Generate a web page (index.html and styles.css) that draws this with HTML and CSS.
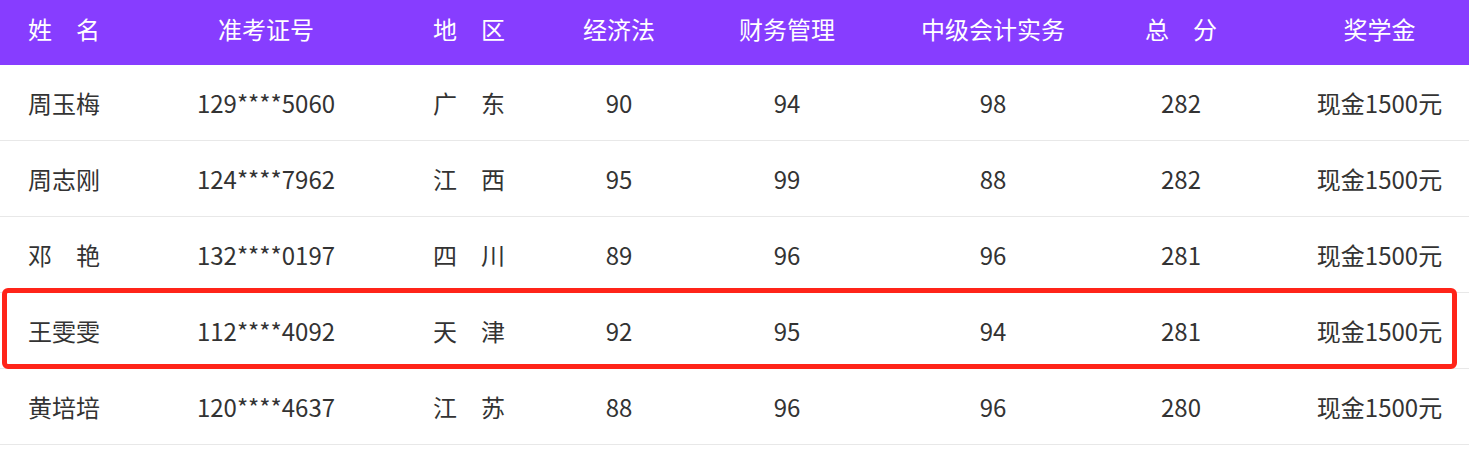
FILE: index.html
```html
<!DOCTYPE html>
<html lang="zh-CN">
<head>
<meta charset="utf-8">
<title>奖学金名单</title>
<link rel="stylesheet" href="styles.css">
</head>
<body>
<div class="table">
  <div class="row head">
    <div class="cell first">姓　名</div>
    <div class="cell">准考证号</div>
    <div class="cell">地　区</div>
    <div class="cell">经济法</div>
    <div class="cell">财务管理</div>
    <div class="cell">中级会计实务</div>
    <div class="cell">总　分</div>
    <div class="cell">奖学金</div>
  </div>
  <div class="row">
    <div class="cell first">周玉梅</div>
    <div class="cell">129****5060</div>
    <div class="cell">广　东</div>
    <div class="cell">90</div>
    <div class="cell">94</div>
    <div class="cell">98</div>
    <div class="cell">282</div>
    <div class="cell">现金1500元</div>
  </div>
  <div class="row">
    <div class="cell first">周志刚</div>
    <div class="cell">124****7962</div>
    <div class="cell">江　西</div>
    <div class="cell">95</div>
    <div class="cell">99</div>
    <div class="cell">88</div>
    <div class="cell">282</div>
    <div class="cell">现金1500元</div>
  </div>
  <div class="row">
    <div class="cell first">邓　艳</div>
    <div class="cell">132****0197</div>
    <div class="cell">四　川</div>
    <div class="cell">89</div>
    <div class="cell">96</div>
    <div class="cell">96</div>
    <div class="cell">281</div>
    <div class="cell">现金1500元</div>
  </div>
  <div class="row highlight">
    <div class="cell first">王雯雯</div>
    <div class="cell">112****4092</div>
    <div class="cell">天　津</div>
    <div class="cell">92</div>
    <div class="cell">95</div>
    <div class="cell">94</div>
    <div class="cell">281</div>
    <div class="cell">现金1500元</div>
  </div>
  <div class="row">
    <div class="cell first">黄培培</div>
    <div class="cell">120****4637</div>
    <div class="cell">江　苏</div>
    <div class="cell">88</div>
    <div class="cell">96</div>
    <div class="cell">96</div>
    <div class="cell">280</div>
    <div class="cell">现金1500元</div>
  </div>
</div>
</body>
</html>
```

FILE: styles.css
```css
html, body {
  margin: 0;
  padding: 0;
  background: #ffffff;
}
body {
  font-family: "Noto Sans CJK SC", "Open Sans", sans-serif;
  font-size: 24px;
  color: #333333;
}
.table {
  width: 1469px;
}
.row {
  display: grid;
  grid-template-columns: 172px 188px 218px 82px 254px 158px 218px 179px;
  height: 75px;
  align-items: center;
  border-bottom: 1px solid #e8e8e8;
  position: relative;
}
.row.head {
  height: 65px;
  border-bottom: none;
  background: #873dff;
  color: #ffffff;
  padding-bottom: 7px;
  box-sizing: border-box;
}
.cell {
  text-align: center;
  white-space: nowrap;
  line-height: 1;
}
.cell.first {
  text-align: left;
  padding-left: 28px;
}
.highlight::after {
  content: "";
  position: absolute;
  top: -5px;
  bottom: -1px;
  left: 2px;
  right: 12px;
  border: 5px solid #ff2419;
  border-radius: 6px;
  pointer-events: none;
}
```
